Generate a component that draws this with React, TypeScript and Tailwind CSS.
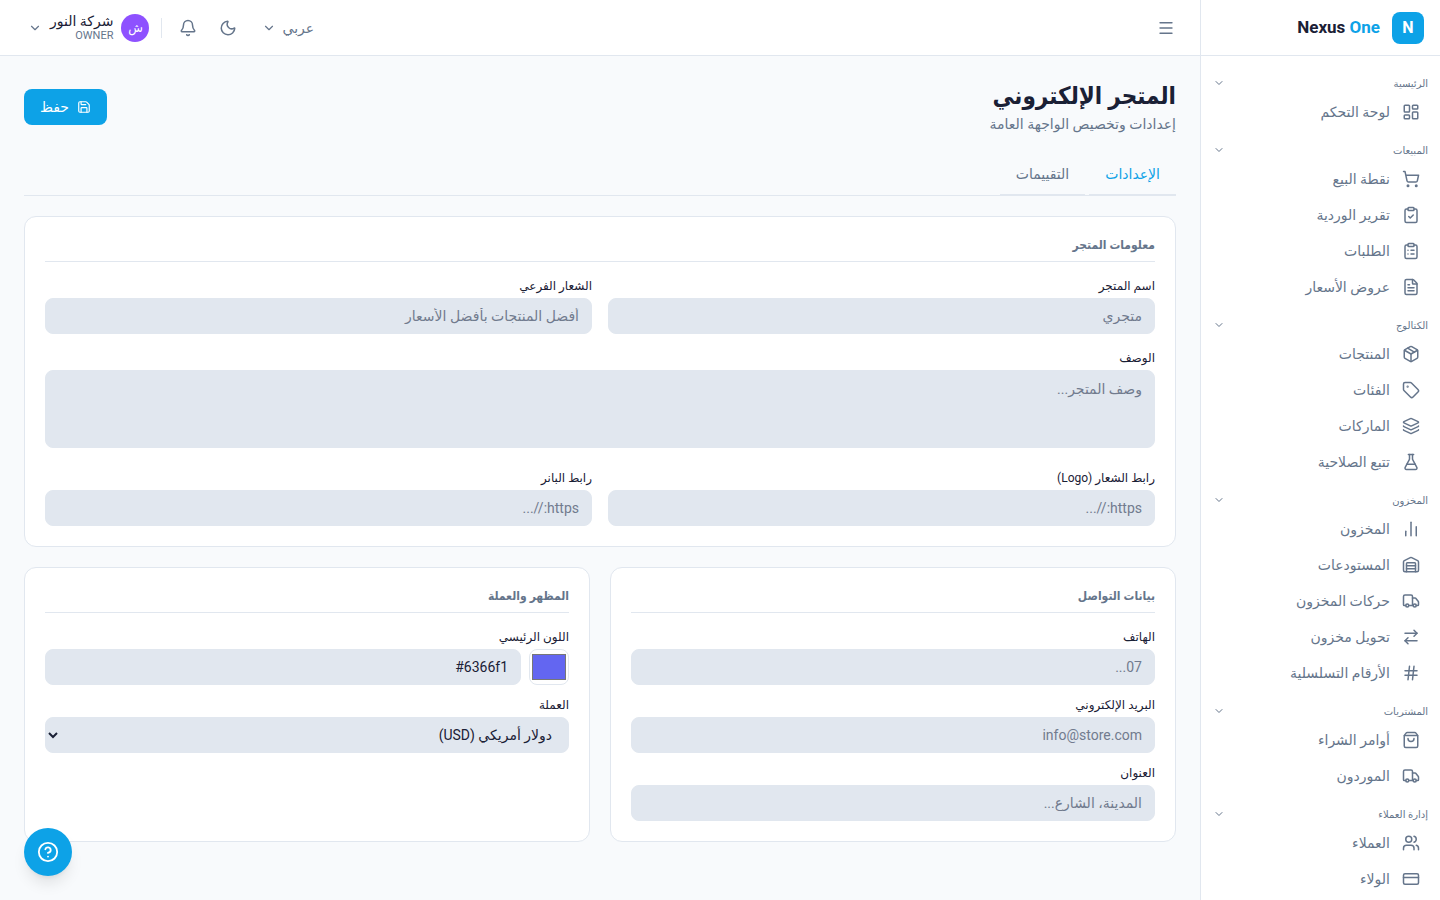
import type { ReactNode } from 'react'
import {
  ArrowRightLeft,
  Bell,
  ChartNoAxesColumn,
  ChevronDown,
  CircleHelp,
  ClipboardCheck,
  ClipboardList,
  CreditCard,
  FileText,
  FlaskConical,
  Hash,
  Layers,
  LayoutDashboard,
  Menu,
  Moon,
  Package,
  Save,
  ShoppingBag,
  ShoppingCart,
  Tag,
  Truck,
  Users,
  Warehouse,
  type LucideIcon,
} from 'lucide-react'

type NavGroup = {
  label: string
  items: { label: string; icon: LucideIcon }[]
}

const navGroups: NavGroup[] = [
  { label: 'الرئيسية', items: [{ label: 'لوحة التحكم', icon: LayoutDashboard }] },
  {
    label: 'المبيعات',
    items: [
      { label: 'نقطة البيع', icon: ShoppingCart },
      { label: 'تقرير الوردية', icon: ClipboardCheck },
      { label: 'الطلبات', icon: ClipboardList },
      { label: 'عروض الأسعار', icon: FileText },
    ],
  },
  {
    label: 'الكتالوج',
    items: [
      { label: 'المنتجات', icon: Package },
      { label: 'الفئات', icon: Tag },
      { label: 'الماركات', icon: Layers },
      { label: 'تتبع الصلاحية', icon: FlaskConical },
    ],
  },
  {
    label: 'المخزون',
    items: [
      { label: 'المخزون', icon: ChartNoAxesColumn },
      { label: 'المستودعات', icon: Warehouse },
      { label: 'حركات المخزون', icon: Truck },
      { label: 'تحويل مخزون', icon: ArrowRightLeft },
      { label: 'الأرقام التسلسلية', icon: Hash },
    ],
  },
  {
    label: 'المشتريات',
    items: [
      { label: 'أوامر الشراء', icon: ShoppingBag },
      { label: 'الموردون', icon: Truck },
    ],
  },
  {
    label: 'إدارة العملاء',
    items: [
      { label: 'العملاء', icon: Users },
      { label: 'الولاء', icon: CreditCard },
    ],
  },
]

const inputClass =
  'block h-9 w-full min-w-0 rounded-lg border border-[#e1e7ef] bg-[#e1e7ef] px-3 text-sm text-[#1a2035] placeholder:text-[#717b8e] outline-none'

function Sidebar() {
  return (
    <aside className="sticky top-0 flex h-screen w-60 shrink-0 flex-col overflow-hidden border-l border-[#e1e7ef] bg-white">
      <div className="flex h-14 shrink-0 items-center gap-3 border-b border-[#e1e7ef] px-4">
        <div className="flex size-8 items-center justify-center rounded-lg bg-[#0da2e7] text-base font-bold text-white">
          N
        </div>
        <span dir="ltr" className="text-[17px] font-bold text-[#1a2035]">
          Nexus <span className="text-[#0da2e7]">One</span>
        </span>
      </div>
      <nav className="flex flex-col gap-[9px] px-2 pt-4">
        {navGroups.map((group) => (
          <div key={group.label}>
            <button
              type="button"
              className="flex h-[22px] w-full items-center justify-between px-1 text-[10px] text-[#65758b]"
            >
              {group.label}
              <ChevronDown size={12} />
            </button>
            {group.items.map(({ label, icon: Icon }) => (
              <a
                key={label}
                href="#"
                className="flex h-9 items-center gap-3 rounded-lg px-3 text-sm text-[#65758b]"
              >
                <Icon size={18} strokeWidth={2} className="shrink-0" />
                {label}
              </a>
            ))}
          </div>
        ))}
      </nav>
    </aside>
  )
}

function Header() {
  return (
    <header className="flex h-14 items-center justify-between border-b border-[#e1e7ef] bg-white px-4 text-[#65758b]">
      <button type="button" aria-label="القائمة" className="flex size-9 items-center justify-center">
        <Menu size={18} strokeWidth={1.75} />
      </button>
      <div className="flex items-center gap-1">
        <button type="button" className="flex h-9 items-center gap-1.5 px-3 text-sm">
          عربي
          <ChevronDown size={14} />
        </button>
        <button type="button" aria-label="الوضع الليلي" className="flex size-9 items-center justify-center">
          <Moon size={18} />
        </button>
        <button type="button" aria-label="الإشعارات" className="flex size-9 items-center justify-center">
          <Bell size={18} />
        </button>
        <div className="mr-1 h-5 w-px bg-[#e1e7ef]" />
        <button type="button" className="flex h-10 items-center gap-2 pr-2 pl-3">
          <span className="flex size-7 items-center justify-center rounded-full bg-[#8e51ff] text-xs text-white">
            ش
          </span>
          <span className="flex flex-col items-start">
            <span className="text-sm leading-4 text-[#1a2035]">شركة النور</span>
            <span className="text-[11px] leading-[14px]">OWNER</span>
          </span>
          <ChevronDown size={14} />
        </button>
      </div>
    </header>
  )
}

function Card({ title, children }: { title: string; children: ReactNode }) {
  return (
    <section className="rounded-xl border border-[#e1e7ef] bg-white p-5">
      <h2 className="mb-4 border-b border-[#e1e7ef] pb-2 font-['Roboto','DejaVu_Sans_Condensed',sans-serif] text-xs leading-4 font-bold text-[#65758b]">
        {title}
      </h2>
      {children}
    </section>
  )
}

function Field({ id, label, children }: { id: string; label: string; children: ReactNode }) {
  return (
    <div>
      <label htmlFor={id} className="mb-1 block text-xs leading-4 text-[#1a2035]">
        {label}
      </label>
      {children}
    </div>
  )
}

export default function App() {
  return (
    <div
      dir="rtl"
      className="flex min-h-screen bg-[#f8fafc] font-['Roboto','DejaVu_Sans',sans-serif] text-[#1a2035]"
    >
      <Sidebar />
      <div className="min-w-0 flex-1">
        <Header />
        <main className="flex flex-col gap-5 p-6">
          <div className="flex items-center justify-between">
            <div>
              <h1 className="font-['Roboto','DejaVu_Sans_Condensed',sans-serif] text-2xl leading-8 font-bold">
                المتجر الإلكتروني
              </h1>
              <p className="mt-0.5 text-sm leading-5 text-[#65758b]">إعدادات وتخصيص الواجهة العامة</p>
            </div>
            <button
              type="button"
              className="flex h-9 items-center gap-2 rounded-lg bg-[#0da2e7] px-4 text-sm text-white"
            >
              <Save size={14} />
              حفظ
            </button>
          </div>

          <div className="flex gap-1 border-b border-[#e1e7ef] text-sm">
            <button type="button" className="-mb-px h-[42px] border-b-2 border-[#e1e7ef] px-4 text-[#0da2e7]">
              الإعدادات
            </button>
            <button type="button" className="-mb-px h-[42px] border-b-2 border-[#e1e7ef] px-4 text-[#65758b]">
              التقييمات
            </button>
          </div>

          <Card title="معلومات المتجر">
            <div className="grid grid-cols-2 gap-4">
              <Field id="name" label="اسم المتجر">
                <input id="name" className={inputClass} placeholder="متجري" />
              </Field>
              <Field id="tagline" label="الشعار الفرعي">
                <input id="tagline" className={inputClass} placeholder="أفضل المنتجات بأفضل الأسعار" />
              </Field>
              <div className="col-span-2 pb-1.5">
                <Field id="description" label="الوصف">
                  <textarea
                    id="description"
                    className="block h-[78px] w-full resize-none rounded-lg border border-[#e1e7ef] bg-[#e1e7ef] px-3 py-2 text-sm leading-5 outline-none placeholder:text-[#717b8e]"
                    placeholder="وصف المتجر..."
                  />
                </Field>
              </div>
              <Field id="logo" label="رابط الشعار (Logo)">
                <input id="logo" className={inputClass} placeholder="https://..." />
              </Field>
              <Field id="banner" label="رابط البانر">
                <input id="banner" className={inputClass} placeholder="https://..." />
              </Field>
            </div>
          </Card>

          <div className="grid grid-cols-2 gap-5">
            <Card title="بيانات التواصل">
              <div className="flex flex-col gap-3">
                <Field id="phone" label="الهاتف">
                  <input id="phone" className={inputClass} placeholder="07..." />
                </Field>
                <Field id="email" label="البريد الإلكتروني">
                  <input id="email" className={inputClass} placeholder="info@store.com" />
                </Field>
                <Field id="address" label="العنوان">
                  <input id="address" className={inputClass} placeholder="المدينة، الشارع..." />
                </Field>
              </div>
            </Card>
            <Card title="المظهر والعملة">
              <div className="flex flex-col gap-3">
                <Field id="color" label="اللون الرئيسي">
                  <div className="flex gap-2">
                    <input
                      type="color"
                      aria-label="اللون الرئيسي"
                      defaultValue="#6366f1"
                      className="h-9 w-10 shrink-0 rounded-lg border border-[#e1e7ef] bg-white"
                    />
                    <input id="color" className={inputClass} defaultValue="#6366f1" />
                  </div>
                </Field>
                <Field id="currency" label="العملة">
                  <select id="currency" className={inputClass}>
                    <option>دولار أمريكي (USD)</option>
                  </select>
                </Field>
              </div>
            </Card>
          </div>
        </main>
      </div>

      <button
        type="button"
        aria-label="مساعدة"
        className="fixed bottom-6 left-6 flex size-12 items-center justify-center rounded-full bg-[#0da2e7] text-white shadow-lg"
      >
        <CircleHelp size={22} />
      </button>
    </div>
  )
}
